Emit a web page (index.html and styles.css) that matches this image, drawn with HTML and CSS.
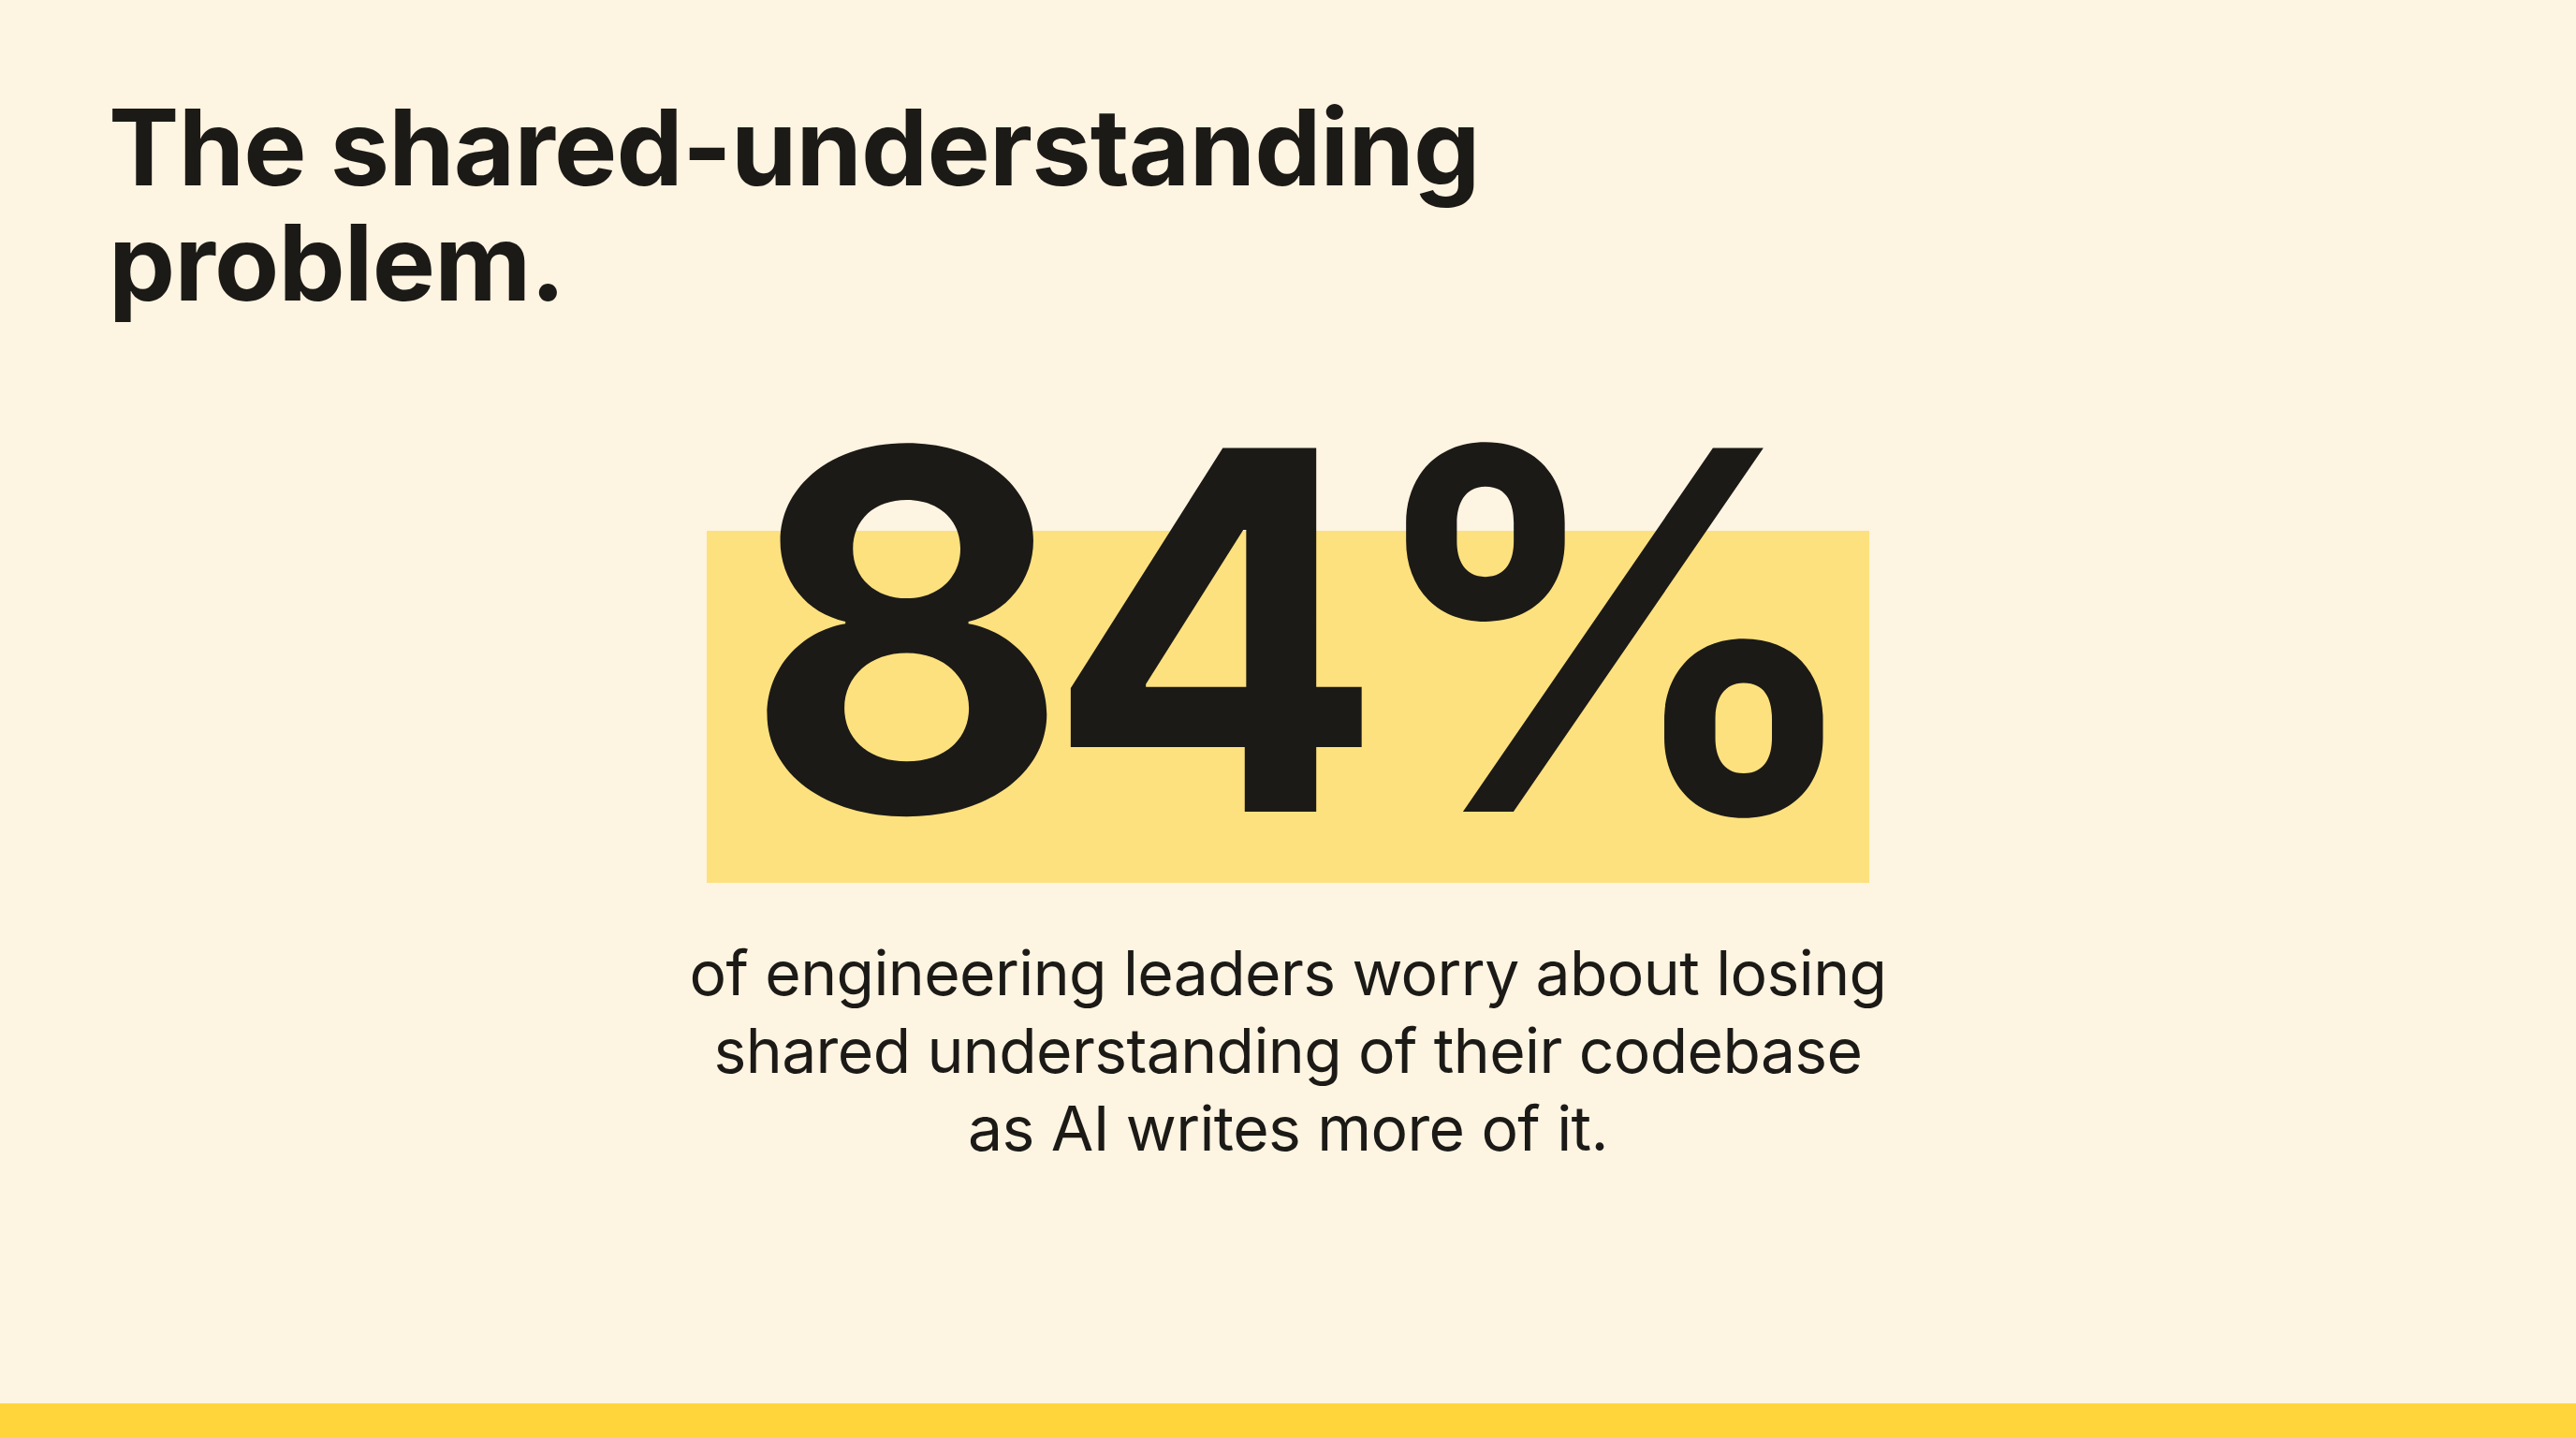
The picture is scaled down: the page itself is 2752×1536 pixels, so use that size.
FILE: index.html
```html
<!DOCTYPE html>
<html lang="en">
<head>
<meta charset="utf-8">
<title>The shared-understanding problem.</title>
<link rel="stylesheet" href="styles.css">
</head>
<body>
<main class="slide">
  <h1 class="title">The shared-understanding<br>problem.</h1>
  <section class="stat">
    <div class="figure"><span class="figure-text">84%</span></div>
    <p class="caption">of engineering leaders worry about losing<br>shared understanding of their codebase<br>as AI writes more of it.</p>
  </section>
  <div class="bottom-bar"></div>
</main>
</body>
</html>
```
FILE: styles.css
```css
html, body {
  margin: 0;
  padding: 0;
}
body {
  background: #fdf4e1;
  color: #1c1a17;
  font-family: Inter, "Noto Sans", "Liberation Sans", sans-serif;
}
.slide {
  width: 2752px;
  height: 1536px;
  display: flex;
  flex-direction: column;
  overflow: hidden;
}
.title {
  margin: 0;
  padding: 96px 0 0 116px;
  font-size: 113px;
  line-height: 123px;
  font-weight: 700;
  letter-spacing: -0.8px;
}
.stat {
  flex: 1;
  display: flex;
  flex-direction: column;
  align-items: center;
  padding-top: 64px;
}
.figure {
  position: relative;
  isolation: isolate;
  width: 1242px;
  display: flex;
  justify-content: center;
  font-size: 534px;
  line-height: 534px;
  font-weight: 700;
  letter-spacing: -25px;
}
.figure-text {
  padding-left: 14px;
}
.figure::before {
  content: "";
  position: absolute;
  left: 0;
  right: 0;
  top: 161px;
  bottom: -3px;
  background: #fde17e;
  z-index: -1;
}
.caption {
  margin: 58px 0 0;
  text-align: center;
  font-size: 66px;
  line-height: 83px;
  font-weight: 400;
  letter-spacing: -0.6px;
}
.bottom-bar {
  height: 37px;
  background: #ffd53b;
  flex-shrink: 0;
}
```
